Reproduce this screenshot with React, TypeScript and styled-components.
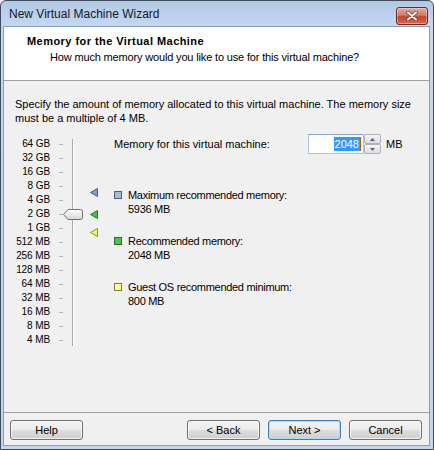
import styled, { createGlobalStyle } from 'styled-components';

const GlobalStyle = createGlobalStyle`
  html, body {
    margin: 0;
    padding: 0;
    background: #ffffff;
  }
  body {
    font-family: 'Liberation Sans', Arial, sans-serif;
    font-size: 11px;
    color: #000;
  }
`;

const Window = styled.div`
  width: 434px;
  height: 450px;
  box-sizing: border-box;
  border: 1px solid #3f4b5b;
  border-radius: 6px 6px 0 0;
  background: linear-gradient(to bottom, #b2c9e5 0px, #c4d8ef 26px, #c0d5ee 100%);
  padding: 0 3px 3px 2px;
  display: flex;
  flex-direction: column;
`;

const TitleBar = styled.div`
  height: 25px;
  display: flex;
  align-items: flex-start;
  padding-left: 6px;
`;

const TitleText = styled.div`
  flex: 1;
  font-size: 12px;
  line-height: 15px;
  padding-top: 6px;
  color: #14182a;
`;

const CloseButton = styled.div`
  width: 30px;
  height: 16px;
  margin: 6px 2px 0 0;
  border: 1px solid #6e2a22;
  border-radius: 3px;
  background: linear-gradient(to bottom, #e4a89a 0%, #d47a6a 45%, #c2412f 55%, #d66a52 100%);
  box-shadow: inset 0 0 0 1px rgba(255, 255, 255, 0.35);
  display: flex;
  align-items: center;
  justify-content: center;
`;

const Client = styled.div`
  flex: 1;
  display: flex;
  flex-direction: column;
  border: 1px solid #8a9db6;
  background: #f0f0f0;
  overflow: hidden;
`;

const Header = styled.div`
  height: 54px;
  box-sizing: border-box;
  background: #ffffff;
  border-bottom: 1px solid #a0a0a0;
  padding: 7px 0 0 23px;
`;

const HeaderTitle = styled.div`
  font-weight: bold;
  line-height: 14px;
  letter-spacing: 0.45px;
`;

const HeaderSub = styled.div`
  line-height: 14px;
  margin: 2px 0 0 23px;
  letter-spacing: -0.16px;
`;

const Body = styled.div`
  flex: 1;
  padding: 16px 0 0 11px;
`;

const Description = styled.div`
  line-height: 14px;
  white-space: nowrap;
`;

const MainRow = styled.div`
  display: flex;
  margin-top: 9px;
`;

const SliderArea = styled.div`
  position: relative;
  width: 99px;
  display: flex;
  padding-top: 3px;
`;

const Scale = styled.div`
  display: flex;
  flex-direction: column;
`;

const ScaleRow = styled.div`
  height: 14px;
  display: flex;
  align-items: center;
`;

const ScaleLabel = styled.span`
  width: 35px;
  text-align: right;
  white-space: nowrap;
  font-size: 10px;
  line-height: 14px;
  letter-spacing: -0.1px;
`;

const Tick = styled.span`
  width: 4px;
  height: 1px;
  margin-left: 9px;
  background: #b4b4b4;
`;

const Track = styled.div`
  width: 1px;
  margin: 2px 0 1px 9px;
  background: #a8a8a8;
  border-right: 1px solid #ffffff;
`;

const Thumb = styled.svg`
  position: absolute;
  left: 48px;
`;

const Marker = styled.svg`
  position: absolute;
  left: 75px;
`;

const RightColumn = styled.div`
  flex: 1;
  display: flex;
  flex-direction: column;
`;

const MemoryRow = styled.div`
  height: 20px;
  display: flex;
  align-items: center;
`;

const MemoryLabel = styled.span`
  width: 194px;
`;

const InputBox = styled.div`
  width: 56px;
  height: 20px;
  box-sizing: border-box;
  border: 1px solid #aac6e2;
  border-top-color: #7ea6d0;
  background: #fff;
  display: flex;
  align-items: center;
  justify-content: flex-end;
  padding-right: 2px;
`;

const Selected = styled.span`
  background: #3399ff;
  color: #fff;
  line-height: 14px;
  padding: 0 1px;
`;

const Caret = styled.span`
  width: 1px;
  height: 14px;
  background: #c05a00;
`;

const Spinner = styled.div`
  width: 17px;
  height: 20px;
  display: flex;
  flex-direction: column;
`;

const SpinButton = styled.div`
  flex: 1;
  box-sizing: border-box;
  border: 1px solid #b2b2b2;
  border-radius: 2px;
  background: linear-gradient(to bottom, #f6f6f6, #dedede);
  display: flex;
  align-items: center;
  justify-content: center;
`;

const Unit = styled.span`
  margin-left: 5px;
`;

const Legend = styled.div`
  display: flex;
  flex-direction: column;
  gap: 18px;
  margin-top: 34px;
`;

const LegendItem = styled.div`
  display: flex;
  align-items: flex-start;
  line-height: 14px;
  letter-spacing: -0.3px;
`;

const Swatch = styled.span<{ $fill: string; $edge: string }>`
  width: 8px;
  height: 8px;
  box-sizing: border-box;
  margin: 3px 6px 0 0;
  border: 1px solid ${p => p.$edge};
  background: ${p => p.$fill};
`;

const Footer = styled.div`
  display: flex;
  gap: 8px;
  border-top: 1px solid #a0a0a0;
  padding: 7px 7px 5px 6px;
`;

const Spacer = styled.div`
  flex: 1;
`;

const Button = styled.button<{ $default?: boolean }>`
  width: 73px;
  height: 20px;
  font-family: 'Liberation Sans', Arial, sans-serif;
  font-size: 11px;
  color: #000;
  border: 1px solid ${p => (p.$default ? '#3c7fb1' : '#707070')};
  border-radius: 3px;
  background: linear-gradient(to bottom, #f2f2f2 0%, #ebebeb 50%, #dddddd 51%, #cfcfcf 100%);
  box-shadow: inset 0 0 0 1px ${p => (p.$default ? '#a6dcf8' : 'rgba(255, 255, 255, 0.7)')};
  padding: 0;
`;

const sizes = ['64 GB', '32 GB', '16 GB', '8 GB', '4 GB', '2 GB', '1 GB', '512 MB', '256 MB', '128 MB', '64 MB', '32 MB', '16 MB', '8 MB', '4 MB'];

// vertical centre (relative to slider area) for a value in MB
const centerFor = (mb: number) => 3 + 7 + 14 * Math.log2(65536 / mb);

const markers = [
  { mb: 5936, fill: '#7f9fd2', edge: '#3e5f94' },
  { mb: 2048, fill: '#46c046', edge: '#1f7a1f' },
  { mb: 800, fill: '#f4f45a', edge: '#8f8f2a' },
];

const legend = [
  { label: 'Maximum recommended memory:', value: '5936 MB', fill: '#a4bbdc', edge: '#4e5e74' },
  { label: 'Recommended memory:', value: '2048 MB', fill: '#4cc24c', edge: '#2a6e2a' },
  { label: 'Guest OS recommended minimum:', value: '800 MB', fill: '#ffff8c', edge: '#7c7c50' },
];

export default function App() {
  const memory = 2048;

  return (
    <>
      <GlobalStyle />
      <Window>
        <TitleBar>
          <TitleText>New Virtual Machine Wizard</TitleText>
          <CloseButton>
            <svg width="12" height="10" viewBox="0 0 12 10">
              <path d="M2 1.5 L10 8.5 M10 1.5 L2 8.5" stroke="#7a2c22" strokeWidth="3.4" strokeLinecap="round" />
              <path d="M2 1.5 L10 8.5 M10 1.5 L2 8.5" stroke="#ffffff" strokeWidth="2" strokeLinecap="round" />
            </svg>
          </CloseButton>
        </TitleBar>
        <Client>
          <Header>
            <HeaderTitle>Memory for the Virtual Machine</HeaderTitle>
            <HeaderSub>How much memory would you like to use for this virtual machine?</HeaderSub>
          </Header>
          <Body>
            <Description>
              Specify the amount of memory allocated to this virtual machine. The memory size
              <br />
              must be a multiple of 4 MB.
            </Description>
            <MainRow>
              <SliderArea>
                <Scale>
                  {sizes.map(s => (
                    <ScaleRow key={s}>
                      <ScaleLabel>{s}</ScaleLabel>
                      <Tick />
                    </ScaleRow>
                  ))}
                </Scale>
                <Track />
                <Thumb width="20" height="11" viewBox="0 0 20 11" style={{ top: Math.round(centerFor(memory) - 5.5) }}>
                  <defs>
                    <linearGradient id="thumbFill" x1="0" y1="0" x2="0" y2="1">
                      <stop offset="0" stopColor="#ffffff" />
                      <stop offset="1" stopColor="#d6d6d6" />
                    </linearGradient>
                  </defs>
                  <path d="M0.5 5.5 L5 0.5 H17.5 Q19.5 0.5 19.5 2.5 V8.5 Q19.5 10.5 17.5 10.5 H5 Z" fill="url(#thumbFill)" stroke="#707070" />
                </Thumb>
                {markers.map(m => (
                  <Marker key={m.mb} width="8" height="9" viewBox="0 0 8 9" style={{ top: Math.round(centerFor(m.mb) - 4.5) }}>
                    <polygon points="0.5,4.5 7.5,0.5 7.5,8.5" fill={m.fill} stroke={m.edge} />
                  </Marker>
                ))}
              </SliderArea>
              <RightColumn>
                <MemoryRow>
                  <MemoryLabel>Memory for this virtual machine:</MemoryLabel>
                  <InputBox>
                    <Selected>{memory}</Selected>
                    <Caret />
                  </InputBox>
                  <Spinner>
                    <SpinButton>
                      <svg width="5" height="3" viewBox="0 0 5 3">
                        <polygon points="0,3 2.5,0 5,3" fill="#4d6185" />
                      </svg>
                    </SpinButton>
                    <SpinButton>
                      <svg width="5" height="3" viewBox="0 0 5 3">
                        <polygon points="0,0 5,0 2.5,3" fill="#4d6185" />
                      </svg>
                    </SpinButton>
                  </Spinner>
                  <Unit>MB</Unit>
                </MemoryRow>
                <Legend>
                  {legend.map(l => (
                    <LegendItem key={l.label}>
                      <Swatch $fill={l.fill} $edge={l.edge} />
                      <div>
                        <div>{l.label}</div>
                        <div>{l.value}</div>
                      </div>
                    </LegendItem>
                  ))}
                </Legend>
              </RightColumn>
            </MainRow>
          </Body>
          <Footer>
            <Button>Help</Button>
            <Spacer />
            <Button>&lt; Back</Button>
            <Button $default>Next &gt;</Button>
            <Button>Cancel</Button>
          </Footer>
        </Client>
      </Window>
    </>
  );
}
